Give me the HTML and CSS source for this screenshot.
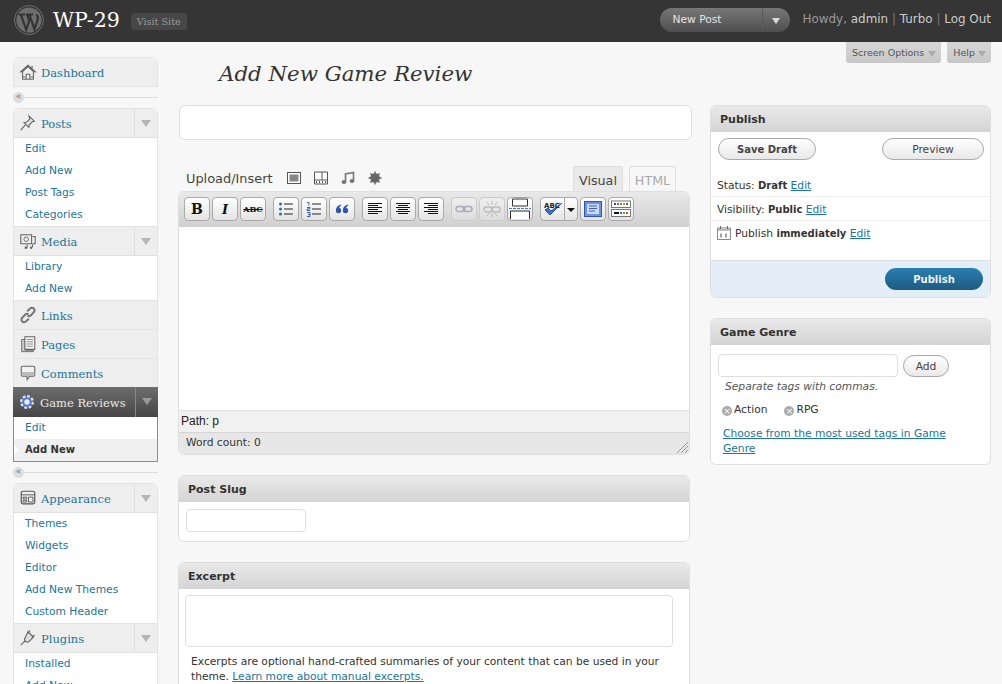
FILE: index.html
```html
<!DOCTYPE html>
<html lang="en">
<head>
    <meta charset="UTF-8">
    <title>Add New Game Review</title>
    <link rel="stylesheet" href="styles.css">
</head>
<body>

    <header class="topbar">
        <svg class="logo" viewBox="0 0 30 30" width="30" height="30">
            <circle cx="15" cy="15" r="14.5" fill="none" stroke="#6e6e6e"/>
            <circle cx="15" cy="15" r="12.6" fill="#6e6e6e"/>
            <path d="M4.500 9.500h6.500M7 9.800l5.200 15 3-9-2-6M12 9.500h7M15.500 9.800l5 14.600 3.200-10c.8-2.400-.4-4-1.700-4.800" fill="none" stroke="#333" stroke-width="2.100"/>
        </svg>
        <span class="site-name">WP-29</span>
        <a class="visit-site">Visit Site</a>
        <div class="favorite">
            <span class="favorite-label">New Post</span>
            <span class="favorite-arrow"></span>
        </div>
        <div class="user-links">Howdy, <b>admin</b> <i>|</i> <b>Turbo</b> <i>|</i> <b>Log Out</b></div>
    </header>

    <div class="page">
        <nav class="sidebar">
            <ul class="menu">
                <li class="menu-group">
                    <div class="menu-head">
                        <svg class="menu-icon" viewBox="0 0 20 20"><path d="M1 10.500L10 2.500l9 8M3 10.500L10 4l7 6.500" fill="none" stroke="#666" stroke-width="1.200"/><path d="M4 9.500V18h12V9.500M8 18v-5.500h4V18M14.500 3v3.500M4 15.500h3M13 15.500h3" fill="none" stroke="#666" stroke-width="1.200"/></svg>
                        <a>Dashboard</a>
                    </div>
                </li>
            </ul>
            <div class="menu-sep"><span>«</span></div>
            <ul class="menu">
                <li class="menu-group">
                    <div class="menu-head">
                        <svg class="menu-icon" viewBox="0 0 20 20"><path d="M11 2l6 6-2 .5-3.500 3.500-.5 3-5.500-5.500 3-.5L12 5.500zM7 12l-5 6" fill="#ddd" stroke="#666" stroke-width="1.200"/></svg>
                        <a>Posts</a><span class="menu-toggle"></span>
                    </div>
                    <ul class="submenu">
                        <li><a>Edit</a></li>
                        <li><a>Add New</a></li>
                        <li><a>Post Tags</a></li>
                        <li><a>Categories</a></li>
                    </ul>
                </li>
                <li class="menu-group">
                    <div class="menu-head">
                        <svg class="menu-icon" viewBox="0 0 20 20"><path d="M2 3h12v10H2zM15 5h3v8h-3M9 14v4M15 14v3" fill="#eee" stroke="#666" stroke-width="1.200"/><circle cx="8" cy="8" r="2.500" fill="none" stroke="#666"/><circle cx="7.500" cy="17.500" r="1.300" fill="#666"/><circle cx="13.500" cy="17.500" r="1.300" fill="#666"/></svg>
                        <a>Media</a><span class="menu-toggle"></span>
                    </div>
                    <ul class="submenu">
                        <li><a>Library</a></li>
                        <li><a>Add New</a></li>
                    </ul>
                </li>
                <li class="menu-group">
                    <div class="menu-head">
                        <svg class="menu-icon" viewBox="0 0 20 20"><path d="M9 6l3-3c1.500-1.300 3.500-1.300 4.500 0s1 3-.3 4.300l-3 3c-1.200 1.200-2.700 1.200-3.700.2M11 14l-3 3c-1.500 1.300-3.500 1.300-4.500 0s-1-3 .3-4.300l3-3c1.200-1.200 2.700-1.200 3.700-.2" fill="none" stroke="#777" stroke-width="2.200"/></svg>
                        <a>Links</a>
                    </div>
                </li>
                <li class="menu-group">
                    <div class="menu-head">
                        <svg class="menu-icon" viewBox="0 0 20 20"><path d="M3 5h4v12h9v1.500H3z" fill="#ccc" stroke="#666"/><path d="M6.500 2h11v14h-11z" fill="#f4f4f4" stroke="#666" stroke-width="1.200"/><path d="M8.500 5h7M8.500 7.500h7M8.500 10h7M8.500 12.500h7" stroke="#888"/></svg>
                        <a>Pages</a>
                    </div>
                </li>
                <li class="menu-group">
                    <div class="menu-head">
                        <svg class="menu-icon" viewBox="0 0 20 20"><path d="M4 2.500h12c1 0 1.500.6 1.500 1.500v8c0 1-.5 1.500-1.500 1.500h-4l-3 4v-4H4c-1 0-1.500-.5-1.500-1.500V4c0-.9.5-1.500 1.500-1.500z" fill="#f2f2f2" stroke="#666" stroke-width="1.200"/><path d="M3 9h14v3c0 .8-.4 1-1 1H4c-.6 0-1-.2-1-1z" fill="#bbb"/></svg>
                        <a>Comments</a>
                    </div>
                </li>
                <li class="menu-group menu-current">
                    <div class="menu-head">
                        <svg class="menu-icon" viewBox="0 0 20 20"><circle cx="10" cy="10" r="6.500" fill="#5a78c8" stroke="#dfe6f8" stroke-width="2.400" stroke-dasharray="3 2"/><circle cx="10" cy="10" r="3" fill="#e6ebfa"/></svg>
                        <a>Game Reviews</a><span class="menu-toggle"></span>
                    </div>
                    <ul class="submenu">
                        <li><a>Edit</a></li>
                        <li class="current"><a>Add New</a></li>
                    </ul>
                </li>
            </ul>
            <div class="menu-sep"><span>«</span></div>
            <ul class="menu">
                <li class="menu-group">
                    <div class="menu-head">
                        <svg class="menu-icon" viewBox="0 0 20 20"><rect x="2.500" y="2.500" width="15" height="14" rx="2" fill="#eee" stroke="#555" stroke-width="1.300"/><path d="M3 6.500h14M4.500 9h4v2h-4zM4.500 12.500h4v2h-4zM10.500 9h5v5.500h-5z" fill="none" stroke="#555"/></svg>
                        <a>Appearance</a><span class="menu-toggle"></span>
                    </div>
                    <ul class="submenu">
                        <li><a>Themes</a></li>
                        <li><a>Widgets</a></li>
                        <li><a>Editor</a></li>
                        <li><a>Add New Themes</a></li>
                        <li><a>Custom Header</a></li>
                    </ul>
                </li>
                <li class="menu-group">
                    <div class="menu-head">
                        <svg class="menu-icon" viewBox="0 0 20 20"><path d="M10 3l6 6-5 5c-1.500 1-3 .8-4-.2s-1.200-2.600-.2-4zM12 1.500L10 5M17.500 7L14 9M7 13l-5 5" fill="#ddd" stroke="#666" stroke-width="1.300"/></svg>
                        <a>Plugins</a><span class="menu-toggle"></span>
                    </div>
                    <ul class="submenu">
                        <li><a>Installed</a></li>
                        <li><a>Add New</a></li>
                    </ul>
                </li>
            </ul>
        </nav>

        <div class="content">
            <div class="screen-tabs">
                <a class="screen-tab">Screen Options</a>
                <a class="screen-tab">Help</a>
            </div>
            <h1>Add New Game Review</h1>

            <div class="columns">
                <main class="main-col">
                    <input class="title-input" type="text">

                    <div class="editor-head">
                        <div class="media-buttons">
                            <span class="upload-label">Upload/Insert</span>
                            <svg viewBox="0 0 14 14" width="14" height="14"><rect x=".5" y="1.500" width="13" height="11" fill="#fff" stroke="#555"/><rect x="2.500" y="3.500" width="9" height="7" fill="#888"/></svg>
                            <svg viewBox="0 0 14 14" width="14" height="14"><path d="M.5 1h13v12H.5z" fill="#fff" stroke="#555"/><path d="M1 9h12M8 1v8" stroke="#555"/><path d="M2 11h1M5 11h1M8 11h1M11 11h1" stroke="#555" stroke-width="2"/></svg>
                            <svg viewBox="0 0 14 14" width="14" height="14"><path d="M4.500 11V3l8-1.500V10" fill="none" stroke="#777" stroke-width="1.600"/><ellipse cx="3" cy="11" rx="2.400" ry="2" fill="#777"/><ellipse cx="11" cy="10" rx="2.400" ry="2" fill="#777"/></svg>
                            <svg viewBox="0 0 14 14" width="14" height="14"><circle cx="7" cy="7" r="4.800" fill="#666"/><path d="M7 .5v13M.5 7h13M2.400 2.400l9.200 9.200M11.600 2.400l-9.200 9.200" stroke="#666" stroke-width="1.400"/></svg>
                        </div>
                        <div class="editor-tabs">
                            <a class="editor-tab active">Visual</a>
                            <a class="editor-tab">HTML</a>
                        </div>
                    </div>

                    <div class="editor">
                        <div class="toolbar">
                            <div class="tool-group">
                                <span class="tool tool-b">B</span>
                                <span class="tool tool-i">I</span>
                                <span class="tool tool-abc">ABC</span>
                            </div>
                            <div class="tool-group">
                                <span class="tool"><svg viewBox="0 0 16 16" width="16" height="16"><path d="M6 3h9M6 8h9M6 13h9" stroke="#222"/><circle cx="2.500" cy="3" r="1.500" fill="#3b5fb5"/><circle cx="2.500" cy="8" r="1.500" fill="#3b5fb5"/><circle cx="2.500" cy="13" r="1.500" fill="#3b5fb5"/></svg></span>
                                <span class="tool"><svg viewBox="0 0 16 16" width="16" height="16"><path d="M6 3h9M6 8h9M6 13h9" stroke="#222"/><path d="M1 1.500h2v3M1 6.500h3v1.500H1v1.500h3M1 11.500h3v4H1M2 13.500h2" fill="none" stroke="#3b5fb5"/></svg></span>
                                <span class="tool"><svg viewBox="0 0 16 16" width="16" height="16"><path d="M7 4C4 5 2.500 7 2.500 9.500a2 2 0 1 0 2-2M14 4c-3 1-4.500 3-4.500 5.500a2 2 0 1 0 2-2" fill="#2d56a8" stroke="#2d56a8" stroke-width="1.300"/></svg></span>
                            </div>
                            <div class="tool-group">
                                <span class="tool"><svg viewBox="0 0 16 16" width="16" height="16"><path d="M1 2.500h14M1 4.500h10M1 6.500h14M1 8.500h10M1 10.500h14M1 12.500h10" stroke="#111"/></svg></span>
                                <span class="tool"><svg viewBox="0 0 16 16" width="16" height="16"><path d="M1 2.500h14M3 4.500h10M1 6.500h14M3 8.500h10M1 10.500h14M3 12.500h10" stroke="#111"/></svg></span>
                                <span class="tool"><svg viewBox="0 0 16 16" width="16" height="16"><path d="M1 2.500h14M5 4.500h10M1 6.500h14M5 8.500h10M1 10.500h14M5 12.500h10" stroke="#111"/></svg></span>
                            </div>
                            <div class="tool-group">
                                <span class="tool tool-off"><svg viewBox="0 0 18 16" width="18" height="16"><rect x="1" y="5.500" width="9" height="5" rx="2.500" fill="none" stroke="#aab" stroke-width="1.400"/><rect x="8" y="5.500" width="9" height="5" rx="2.500" fill="none" stroke="#aab" stroke-width="1.400"/></svg></span>
                                <span class="tool tool-off"><svg viewBox="0 0 18 16" width="18" height="16"><rect x="1" y="6" width="8" height="5" rx="2.500" fill="none" stroke="#bbb" stroke-width="1.400"/><rect x="9" y="6" width="8" height="5" rx="2.500" fill="none" stroke="#bbb" stroke-width="1.400"/><path d="M9 0v4M9 12v4M4 1l2 3M14 1l-2 3M4 15l2-3M14 15l-2-3" stroke="#bbb"/></svg></span>
                                <span class="tool"><svg viewBox="0 0 22 22" width="22" height="22"><path d="M3.500 1h15v7h-15zM1.500 21v-8h19v8" fill="#fff" stroke="#333"/><path d="M0 10.500h22" stroke="#4a7dc4" stroke-dasharray="3 1"/></svg></span>
                            </div>
                            <div class="tool-group">
                                <span class="tool-split">
                                    <span class="tool-main"><svg viewBox="0 0 22 18" width="22" height="18"><path d="M3 10l5 5L20 3l-11 8-3-3z" fill="#3f6fc4" stroke="#2d56a8"/><text x="2" y="7.500" class="abc-mini">ABC</text></svg></span>
                                    <span class="tool-arrow"></span>
                                </span>
                                <span class="tool"><svg viewBox="0 0 18 18" width="18" height="18"><rect x=".5" y="1.500" width="17" height="15" fill="#6c93dc" stroke="#2d56a8"/><rect x="3" y="4" width="12" height="10" fill="#cbdaf5"/><path d="M5 6h8M5 8.500h8M5 11h6" stroke="#3b5fb5"/></svg></span>
                                <span class="tool"><svg viewBox="0 0 20 18" width="20" height="18"><rect x=".5" y="1" width="19" height="6.500" fill="#fff" stroke="#777"/><rect x=".5" y="9.500" width="19" height="7" fill="#fff" stroke="#777"/><path d="M3 4h2" stroke="#555" stroke-width="2"/><path d="M6 4h2" stroke="#c44" stroke-width="2"/><path d="M9 4h2" stroke="#4a4" stroke-width="2"/><path d="M12 4h2" stroke="#c90" stroke-width="2"/><path d="M15 4h2" stroke="#36c" stroke-width="2"/><path d="M3 13h5" stroke="#111" stroke-width="2"/><path d="M9 13h2" stroke="#36c" stroke-width="2"/><path d="M12 13h2" stroke="#4a4" stroke-width="2"/><path d="M15 13h2" stroke="#c44" stroke-width="2"/></svg></span>
                            </div>
                        </div>
                        <div class="editor-area"></div>
                        <div class="editor-path">Path: p</div>
                        <div class="editor-count">
                            Word count: 0
                            <svg class="resize-grip" viewBox="0 0 12 12" width="12" height="12"><path d="M12 1L1 12M12 5l-7 7M12 9l-3 3" stroke="#999"/></svg>
                        </div>
                    </div>

                    <section class="box">
                        <h3>Post Slug</h3>
                        <div class="box-body slug-body">
                            <input class="slug-input" type="text">
                        </div>
                    </section>

                    <section class="box">
                        <h3>Excerpt</h3>
                        <div class="box-body excerpt-body">
                            <textarea class="excerpt-input"></textarea>
                            <p>Excerpts are optional hand-crafted summaries of your content that can be used in your theme. <a class="link">Learn more about manual excerpts.</a></p>
                        </div>
                    </section>
                </main>

                <aside class="side-col">
                    <section class="box publish-box">
                        <h3>Publish</h3>
                        <div class="publish-buttons">
                            <a class="button button-strong">Save Draft</a>
                            <a class="button button-preview">Preview</a>
                        </div>
                        <div class="pub-row">Status: <b>Draft</b> <a class="link">Edit</a></div>
                        <div class="pub-row">Visibility: <b>Public</b> <a class="link">Edit</a></div>
                        <div class="pub-row pub-last">
                            <svg viewBox="0 0 14 14" width="14" height="14"><path d="M.5 2h13v11.500H.5z" fill="#fff" stroke="#888"/><path d="M1 2h12v3H1z" fill="#bbb"/><path d="M3.500 0v3M10.500 0v3" stroke="#666"/><path d="M4 7.500v4M9 7.500v4" stroke="#777" stroke-width="1.400"/></svg>
                            <span>Publish <b>immediately</b> <a class="link">Edit</a></span>
                        </div>
                        <div class="publish-actions">
                            <a class="button-primary">Publish</a>
                        </div>
                    </section>

                    <section class="box genre-box">
                        <h3>Game Genre</h3>
                        <div class="box-body">
                            <div class="tag-add">
                                <input class="tag-input" type="text">
                                <a class="button button-add">Add</a>
                            </div>
                            <p class="hint">Separate tags with commas.</p>
                            <div class="tags">
                                <span class="tag"><span class="tag-x">×</span>Action</span>
                                <span class="tag"><span class="tag-x">×</span>RPG</span>
                            </div>
                            <a class="link tag-cloud-link">Choose from the most used tags in Game Genre</a>
                        </div>
                    </section>
                </aside>
            </div>
        </div>
    </div>

</body>
</html>
```
FILE: styles.css
```css
* {
    box-sizing: border-box;
}

html, body {
    height: 684px;
    overflow: hidden;
}

body {
    margin: 0;
    background: #f7f7f7;
    color: #333;
    font-family: "DejaVu Sans", sans-serif;
    font-size: 10.7px;
}

b {
    font-size: 10px;
}

ul {
    list-style: none;
    margin: 0;
    padding: 0;
}

.link {
    color: #21759b;
    text-decoration: underline;
}

/* Top bar */
.topbar {
    display: flex;
    align-items: center;
    height: 42px;
    padding: 0 11px 0 14px;
    background: #353535;
}

.logo {
    margin-top: -2px;
}

.site-name {
    margin-left: 9px;
    margin-top: -3px;
    color: #fff;
    font-family: "DejaVu Serif", serif;
    font-size: 20.500px;
}

.visit-site {
    margin-left: 11px;
    margin-top: 1px;
    padding: 0 6px;
    height: 17px;
    line-height: 17px;
    background: #474747;
    border-radius: 3px;
    color: #999;
    font-family: "DejaVu Serif", serif;
    font-size: 9.600px;
}

.favorite {
    display: flex;
    align-items: stretch;
    margin-left: auto;
    width: 130px;
    height: 24px;
    margin-top: -3px;
    border-radius: 12px;
    background: linear-gradient(#777, #4e4e4e);
    color: #e4e4e4;
    font-size: 10.700px;
    line-height: 24px;
}

.favorite-label {
    flex: 1;
    padding-left: 12px;
}

.favorite-arrow {
    position: relative;
    width: 28px;
    border-left: 1px solid #5a5a5a;
}

.favorite-arrow::after {
    content: "";
    position: absolute;
    top: 10px;
    left: 9px;
    border: 4px solid transparent;
    border-top: 6px solid #ddd;
    border-bottom: 0;
}

.user-links {
    margin-left: 12px;
    margin-top: -4px;
    color: #999;
    font-size: 11.950px;
    white-space: nowrap;
}

.user-links b {
    color: #ccc;
    font-size: inherit;
    font-weight: normal;
}

.user-links i {
    color: #777;
    font-style: normal;
}

/* Page */
.page {
    display: flex;
    padding-left: 13px;
}

.sidebar {
    flex: none;
    width: 145px;
    margin-top: 15px;
}

.menu-group {
    border: 1px solid #e3e3e3;
    border-top: 0;
    background: #fff;
}

.menu-group:first-child {
    border-top: 1px solid #e3e3e3;
    border-radius: 6px 6px 0 0;
}

.menu-head {
    display: flex;
    align-items: center;
    height: 29px;
    background: #eee;
    border-bottom: 1px solid #dfdfdf;
    font-family: "DejaVu Serif", serif;
    font-size: 11.500px;
}

.menu-head:last-child {
    height: 28px;
    border-bottom: 0;
}

.menu-group:first-child .menu-head {
    border-radius: 6px 6px 0 0;
}

.menu-head a {
    flex: 1;
    padding-top: 1px;
    color: #21759b;
}

.menu-icon {
    flex: none;
    width: 18px;
    height: 18px;
    margin: 0 4px 0 5px;
}

.menu-toggle {
    position: relative;
    flex: none;
    width: 23px;
    height: 100%;
    border-left: 1px solid #dfdfdf;
}

.menu-toggle::after {
    content: "";
    position: absolute;
    top: 11px;
    left: 6px;
    border: 5px solid transparent;
    border-top: 7px solid #b5b5b5;
    border-bottom: 0;
}

.submenu li {
    height: 22px;
    line-height: 21px;
    padding-left: 11px;
    white-space: nowrap;
}

.submenu a {
    color: #21759b;
}

.menu-current {
    margin-top: -1px;
    border-color: #8c8c8c;
    border-top: 0;
}

.menu-current .menu-head {
    height: 30px;
    margin: 0 -1px;
    background: linear-gradient(#6d6d6d, #464646);
    border-bottom: 0;
}

.menu-current .menu-head a {
    color: #e8e8e8;
}

.menu-current .menu-toggle {
    border-left: 1px solid #888;
}

.menu-current .menu-toggle::after {
    border-top-color: #999;
}

.submenu .current {
    position: relative;
    background: #f0f0f0;
    font-size: 10px;
    font-weight: bold;
}

.submenu .current a {
    color: #333;
}

.submenu .current::before {
    content: "";
    position: absolute;
    top: 6px;
    left: 0;
    border: 5px solid transparent;
    border-left: 5px solid #fff;
    border-right: 0;
}

.menu-sep {
    position: relative;
    height: 21px;
}

.menu-sep::before {
    content: "";
    position: absolute;
    top: 10px;
    left: 0;
    right: 0;
    height: 1px;
    background: #ddd;
}

.menu-sep span {
    position: absolute;
    top: 5px;
    left: 0;
    width: 11px;
    height: 11px;
    border-radius: 50%;
    background: #ddd;
    color: #777;
    font-size: 9px;
    line-height: 9px;
    text-align: center;
}

/* Content */
.content {
    flex: none;
    width: 813px;
    margin-left: 20px;
}

.screen-tabs {
    display: flex;
    justify-content: flex-end;
    gap: 6px;
    height: 21px;
}

.screen-tab {
    position: relative;
    padding: 0 16px 0 6px;
    line-height: 22px;
    background: linear-gradient(#d6d6d6, #c8c8c8);
    border-radius: 0 0 3px 3px;
    color: #555;
    font-size: 9.500px;
}

.screen-tab:first-child {
    padding-right: 17px;
}

.screen-tab::after {
    content: "";
    position: absolute;
    top: 9px;
    right: 5px;
    border: 4px solid transparent;
    border-top: 6px solid #aaa;
    border-bottom: 0;
}

h1 {
    height: 22px;
    margin: 0 0 20px 41px;
    color: #333;
    font-family: "DejaVu Serif", serif;
    font-size: 21.300px;
    font-style: italic;
    font-weight: normal;
    line-height: 22px;
}

.columns {
    display: flex;
    gap: 18px;
    align-items: flex-start;
}

.main-col {
    flex: none;
    width: 514px;
}

.side-col {
    flex: none;
    width: 281px;
}

input, textarea {
    display: block;
    background: #fff;
    border: 1px solid #dfdfdf;
    border-radius: 4px;
    margin: 0;
}

.title-input {
    width: 513px;
    height: 35px;
    margin-left: 1px;
    border-radius: 6px;
}

/* Editor */
.editor-head {
    display: flex;
    justify-content: space-between;
    align-items: flex-end;
    height: 25px;
    margin-top: 26px;
    padding: 0 16px 0 8px;
}

.media-buttons {
    display: flex;
    align-items: center;
    gap: 13px;
    height: 26px;
}

.upload-label {
    margin-right: 2px;
    color: #444;
    font-size: 12.900px;
}

.editor-tabs {
    display: flex;
    gap: 6px;
}

.editor-tab {
    width: 47px;
    height: 25px;
    padding: 0 4px;
    border: 1px solid #dfdfdf;
    border-bottom: 0;
    border-radius: 3px 3px 0 0;
    color: #aaa;
    font-size: 12.700px;
    line-height: 27px;
    text-align: center;
}

.editor-tab.active {
    width: 50px;
    background: #e9e9e9;
    color: #444;
}

.editor {
    width: 512px;
    border: 1px solid #dfdfdf;
    border-radius: 6px;
    background: #fff;
    overflow: hidden;
}

.toolbar {
    display: flex;
    gap: 7px;
    height: 35px;
    padding: 5px 0 0 5px;
    background: linear-gradient(#e9e9e9, #d0d0d0);
}

.tool-group {
    display: flex;
    gap: 2px;
}

.tool {
    display: flex;
    align-items: center;
    justify-content: center;
    width: 26px;
    height: 24px;
    border: 1px solid #aaa;
    border-radius: 4px;
    background: linear-gradient(#fff, #e4e4e4);
    color: #111;
}

.tool-off {
    border-color: #ccc;
    background: linear-gradient(#eee, #ddd);
}

.tool-b {
    font-family: "DejaVu Serif", serif;
    font-size: 14px;
    font-weight: bold;
}

.tool-i {
    font-family: "DejaVu Serif", serif;
    font-size: 13px;
    font-style: italic;
    font-weight: bold;
}

.tool-abc {
    font-family: "DejaVu Serif", serif;
    font-size: 8px;
    font-weight: bold;
    text-decoration: line-through;
}

.tool-split {
    display: flex;
    width: 38px;
    height: 24px;
    border: 1px solid #aaa;
    border-radius: 4px;
    background: linear-gradient(#fff, #e4e4e4);
}

.tool-main {
    display: flex;
    align-items: center;
    justify-content: center;
    width: 24px;
    border-right: 1px solid #aaa;
}

.tool-arrow {
    position: relative;
    flex: 1;
}

.tool-arrow::after {
    content: "";
    position: absolute;
    top: 10px;
    left: 2px;
    border: 4px solid transparent;
    border-top: 4px solid #111;
    border-bottom: 0;
}

.abc-mini {
    fill: #222;
    font-family: "DejaVu Sans", sans-serif;
    font-size: 7px;
    font-weight: bold;
}

.editor-area {
    height: 183px;
    background: #fff;
}

.editor-path {
    height: 22px;
    padding-left: 2px;
    background: #f1f1f1;
    border-top: 1px solid #dfdfdf;
    color: #222;
    font-family: "Liberation Sans", sans-serif;
    font-size: 12px;
    line-height: 20px;
}

.editor-count {
    position: relative;
    height: 22px;
    padding-left: 7px;
    background: #e7e7e7;
    border-top: 1px solid #d5d5d5;
    line-height: 20px;
}

.resize-grip {
    position: absolute;
    right: 1px;
    bottom: 1px;
}

/* Boxes */
.box {
    width: 512px;
    margin-top: 20px;
    background: #fff;
    border: 1px solid #dfdfdf;
    border-radius: 6px;
    overflow: hidden;
}

.box h3 {
    height: 26px;
    margin: 0;
    padding-left: 9px;
    background: linear-gradient(#e9e9e9, #d4d4d4);
    color: #333;
    font-size: 11px;
    font-weight: bold;
    line-height: 27px;
}

.slug-body {
    height: 39px;
    padding: 7px;
}

.slug-input {
    width: 120px;
    height: 23px;
}

.excerpt-body {
    padding: 6px 6px 8px;
}

.excerpt-input {
    width: 488px;
    height: 52px;
    resize: none;
}

.excerpt-body p {
    margin: 7px 6px 0;
    line-height: 15px;
}

/* Side boxes */
.publish-box, .genre-box {
    width: 281px;
}

.publish-box {
    margin-top: 0;
}

.publish-buttons {
    display: flex;
    justify-content: space-between;
    height: 41px;
    padding: 6px 6px 0 7px;
}

.button {
    display: block;
    height: 22px;
    border: 1px solid #aaa;
    border-radius: 11px;
    background: linear-gradient(#fff, #e8e8e8);
    color: #444;
    line-height: 21px;
    text-align: center;
}

.button-strong {
    width: 98px;
    font-size: 10px;
    font-weight: bold;
}

.button-preview {
    width: 102px;
}

.pub-row {
    height: 24px;
    padding-left: 6px;
    border-bottom: 1px solid #eee;
    line-height: 25px;
}

.pub-last {
    display: flex;
    align-items: flex-start;
    gap: 4px;
    height: 40px;
    padding-top: 5px;
    border-bottom: 1px solid #dfdfdf;
    line-height: 16px;
}

.publish-actions {
    display: flex;
    justify-content: flex-end;
    height: 36px;
    padding: 7px 7px 0 0;
    background: #e4eef8;
}

.button-primary {
    display: block;
    width: 98px;
    height: 22px;
    border-radius: 11px;
    background: linear-gradient(#2a7fb0, #1c5b82);
    color: #f1f1f1;
    font-size: 10px;
    font-weight: bold;
    line-height: 23px;
    text-align: center;
}

.genre-box .box-body {
    height: 119px;
    padding: 9px 7px 0;
}

.tag-add {
    display: flex;
    align-items: flex-end;
    gap: 5px;
}

.tag-input {
    width: 180px;
    height: 23px;
}

.button-add {
    width: 46px;
}

.hint {
    margin: 2px 0 0 7px;
    color: #555;
    font-style: italic;
    line-height: 15px;
}

.tags {
    display: flex;
    gap: 17px;
    margin: 8px 0 0 4px;
    line-height: 15px;
}

.tag-x {
    display: inline-block;
    width: 10px;
    height: 10px;
    margin-right: 2px;
    border-radius: 50%;
    background: #aaa;
    color: #fff;
    font-size: 9px;
    line-height: 10px;
    text-align: center;
    vertical-align: -1px;
}

.tag-cloud-link {
    display: block;
    width: 235px;
    margin: 9px 0 0 5px;
    line-height: 15px;
}
```
